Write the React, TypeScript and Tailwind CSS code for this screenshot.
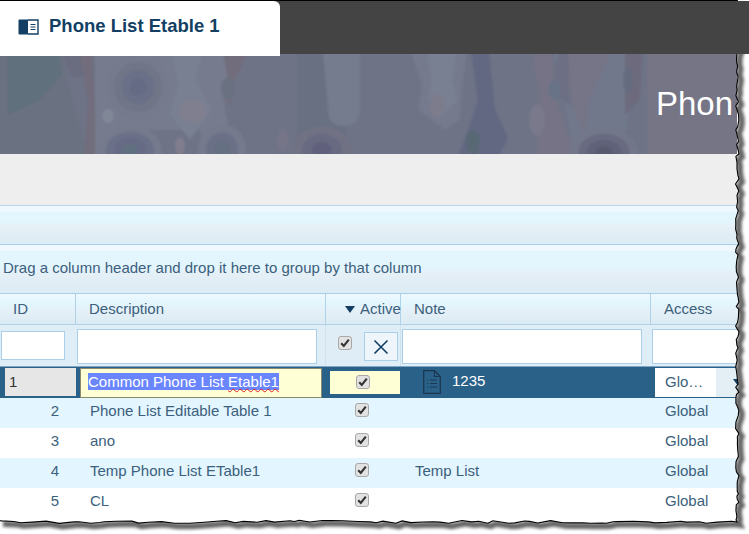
import React from "react";

const cols = "grid grid-cols-[76px_250px_75px_250px_150px] w-[801px]";

function seeded(seed: number) {
  let s = seed;
  return () => {
    s = (s * 16807) % 2147483647;
    return s / 2147483647;
  };
}

function buildEdge() {
  const r = seeded(4711);
  const pts: [number, number][] = [[737, 0]];
  let y = 0;
  while (y < 520) {
    y += 2 + r() * 5;
    pts.push([735.5 + r() * 3.5, Math.min(y, 520)]);
  }
  pts.push([737, 522]);
  let x = 737;
  while (x > 0) {
    x -= 4 + r() * 12;
    const yy = 520.5 + r() * 3 + (r() > 0.8 ? -1.5 : 0);
    pts.push([Math.max(x, 0), yy]);
  }
  return pts;
}

function TornEdge() {
  const pts = buildEdge();
  const line = pts.map((p, i) => (i ? "L" : "M") + p[0].toFixed(1) + " " + p[1].toFixed(1)).join(" ");
  const outside = line + " L0 534 L749 534 L749 0 Z";
  return (
    <svg className="absolute left-0 top-0" width="749" height="534" viewBox="0 0 749 534">
      <defs>
        <clipPath id="outside">
          <path d={outside} />
        </clipPath>
        <filter id="soft" x="-5%" y="-5%" width="110%" height="110%">
          <feGaussianBlur stdDeviation="1.6" />
        </filter>
      </defs>
      <path d={outside} fill="#ffffff" />
      <g clipPath="url(#outside)">
        <path d={line} transform="translate(3 3)" fill="none" stroke="#666666" strokeWidth="6" filter="url(#soft)" />
      </g>
      <path d={line} fill="none" stroke="#000000" strokeWidth="1.1" />
    </svg>
  );
}

function Rings({ x, y, rx, ry, colors }: { x: number; y: number; rx: number; ry: number; colors: string[] }) {
  return (
    <g>
      {colors.map((c, i) => {
        const k = 1 - i / colors.length;
        return <ellipse key={i} cx={x} cy={y} rx={rx * k} ry={ry * k} fill={c} />;
      })}
    </g>
  );
}

function HeroArt() {
  return (
    <svg className="block shrink-0" width="737" height="100" viewBox="0 54 737 100">
      <defs>
        <filter id="heroSoft" x="-2%" y="-10%" width="104%" height="120%">
          <feGaussianBlur stdDeviation="1" />
        </filter>
        <clipPath id="heroClip">
          <rect x="0" y="54" width="737" height="100" />
        </clipPath>
      </defs>
      <rect x="0" y="54" width="737" height="100" fill="#6e7386" />
      <g clipPath="url(#heroClip)">
        <g filter="url(#heroSoft)">
          <path d="M-10 44H60L72 100L90 164H-10Z" fill="#6b7180" />
          <path d="M7 44H58L62 75L40 100L8 115Z" fill="#61707d" />
          <path d="M58 44H82L88 75L72 78Z" fill="#6a6c80" />
          <path d="M78 44H92L98 164H84L88 100Z" fill="#716d7d" />
          <path d="M95 44H245L222 90L235 164H210L200 130H150L125 164H95Z" fill="#767c8e" />
          <Rings x={138} y={87} rx={32} ry={33} colors={["#757a8d", "#6f7487", "#6a6f87", "#656a85"]} />
          <path d="M170 44H205L195 80L212 110L190 140L170 115L178 85Z" fill="#788092" />
          <ellipse cx="193" cy="111" rx="14" ry="12" fill="#807f8f" />
          <ellipse cx="108" cy="116" rx="6" ry="7" fill="#808898" />
          <Rings x={130} y={150} rx={32} ry={24} colors={["#757a8d", "#6b7087", "#666b85", "#617080"]} />
          <ellipse cx="180" cy="146" rx="5" ry="9" fill="#807e8e" />
          <Rings x={222} y={150} rx={24} ry={26} colors={["#757a8d", "#6a7086", "#657082"]} />
          <path d="M222 44H252L225 100L232 105Z" fill="#716d7d" />
          <ellipse cx="228" cy="88" rx="7" ry="11" fill="#6b7180" />
          <ellipse cx="283" cy="140" rx="6" ry="12" fill="#767588" />
          <path d="M298 44H345L352 100L345 125L350 164H298Z" fill="#687081" />
          <path d="M322 44H360V110Q360 126 343 126Q328 126 328 110Z" fill="#757b8e" />
          <Rings x={322} y={150} rx={30} ry={24} colors={["#6f7284", "#686a82", "#61607c"]} />
          <path d="M408 44H468L462 90L460 120L445 130L418 110L422 85Z" fill="#747a8c" />
          <path d="M425 44H458L452 80L458 100L440 118L428 100L432 80Z" fill="#798092" />
          <ellipse cx="437" cy="106" rx="8" ry="12" fill="#7c7b8d" />
          <path d="M470 44H488L495 110L508 138L495 164H455L470 125L478 100Z" fill="#626782" />
          <ellipse cx="473" cy="142" rx="7" ry="12" fill="#586874" />
          <path d="M530 44H552L556 100L580 164H535L540 100Z" fill="#747385" />
          <ellipse cx="537" cy="120" rx="8" ry="16" fill="#7a798b" />
          <path d="M552 44H640L620 164H575L565 105Z" fill="#71788c" />
          <path d="M560 44H575L570 85L580 100L568 105L552 88Z" fill="#6d6f84" />
          <ellipse cx="555" cy="90" rx="6" ry="10" fill="#687388" />
          <path d="M568 44H615L590 100L585 140L570 100Z" fill="#767488" />
          <Rings x={604} y={152} rx={34} ry={24} colors={["#73778a", "#686a80", "#60627a", "#585a70"]} />
          <path d="M625 44H643L640 100L625 115Z" fill="#6d6b7e" />
          <ellipse cx="628" cy="80" rx="5" ry="13" fill="#666c80" />
          <rect x="647" y="44" width="100" height="120" fill="#757486" />
        </g>
      </g>
    </svg>
  );
}

function Check() {
  return (
    <span className="inline-flex w-[14px] h-[14px] items-center justify-center rounded-[3px] border border-[#a8a8a8] bg-[#e2e2e2] shrink-0">
      <svg width="10" height="10" viewBox="0 0 10 10">
        <path d="M1.2 5.2L3.8 8L8.8 1.6" fill="none" stroke="#333333" strokeWidth="2.1" />
      </svg>
    </span>
  );
}

const headBg = "bg-[linear-gradient(#eef8fe_0,#e3f6fe_30%,#e4eff6_60%,#dbebf4_100%)]";

function Row({ id, desc, note, alt }: { id: number; desc: string; note?: string; alt?: boolean }) {
  return (
    <div className={`${cols} h-[30px] items-center text-[15px] text-[#3b5f7c] pb-[3px] ${alt ? "bg-[#e3f5fe]" : "bg-white"}`}>
      <div className="text-right pr-[17px]">{id}</div>
      <div className="pl-[14px]">{desc}</div>
      <div className="pl-[29px]"><div className="flex -mt-[3px]"><Check /></div></div>
      <div className="pl-[14px]">{note}</div>
      <div className="pl-[14px]">Global</div>
    </div>
  );
}

export default function App() {
  return (
    <div className="relative w-[749px] h-[534px] overflow-hidden bg-white font-['Liberation_Sans',Arial,sans-serif]">
      <div className="h-[1px] bg-black" />
      <div className="h-[53px] bg-[#444444] flex relative z-10">
        <div className="w-[280px] h-[55px] bg-white rounded-tr-[6px] flex items-center pb-[4px] pl-[18px] gap-[10px] text-[#123f63]">
          <svg width="21" height="16" viewBox="0 0 21 16" className="shrink-0">
            <path d="M1.5 0.5H10V15.5H1.5Q0.5 15.5 0.5 14.5V1.5Q0.5 0.5 1.5 0.5Z" fill="#123f63" />
            <path d="M10 1H20V15H10" fill="#ffffff" stroke="#123f63" strokeWidth="1.4" />
            <path d="M12.5 5.5H17.5M12.5 8H17.5M12.5 10.5H17.5" stroke="#123f63" strokeWidth="1.1" />
          </svg>
          <span className="text-[18.5px] font-bold leading-none">Phone List Etable 1</span>
        </div>
      </div>
      <div className="relative h-[100px]">
        <HeroArt />
        <div className="absolute left-[656px] top-[31px] text-[33px] leading-[38px] text-white whitespace-nowrap">Phon</div>
      </div>
      <div className="h-[51px] bg-[#eeeeee]" />
      <div className="h-[39px] border-t border-[#b7d6e8] bg-[linear-gradient(#eef8fe_0,#eef8fe_14%,#e3f6fe_15%,#e3f6fe_40%,#e6eff6_55%,#dcecf5_100%)]" />
      <div className="h-[49px] border-t border-[#a9d0e8] bg-[linear-gradient(#eef8fe_0,#eef8fe_12%,#e3f6fe_13%,#e3f6fe_45%,#e5eff6_60%,#dcecf5_100%)] flex items-center pl-[3px] pb-[2px] text-[15px] text-[#3b5f7c]">
        Drag a column header and drop it here to group by that column
      </div>
      <div className={`${cols} h-[31px] border-t border-[#a9d0e8] text-[15px] text-[#3b5f7c] ${headBg}`}>
        <div className="border-r border-[#b0d2e8] pl-[13px] flex items-center">ID</div>
        <div className="border-r border-[#b0d2e8] pl-[13px] flex items-center">Description</div>
        <div className="border-r border-[#b0d2e8] flex items-center pl-[19px] gap-[5px]">
          <svg width="10" height="7" viewBox="0 0 10 7" className="shrink-0"><path d="M0 0H10L5 7Z" fill="#123f63" /></svg>
          <span>Active</span>
        </div>
        <div className="border-r border-[#b0d2e8] pl-[13px] flex items-center">Note</div>
        <div className="pl-[13px] flex items-center">Access</div>
      </div>
      <div className={`${cols} h-[42px] border-t border-[#b0d2e8] bg-[#deedf6]`}>
        <div className="pl-[1px] pt-[6px]">
          <div className="w-[64px] h-[29px] bg-white border border-[#a9d0e8]" />
        </div>
        <div className="border-r border-[#cfe2ee] pl-[1px] pt-[4px]">
          <div className="w-[240px] h-[35px] bg-white border border-[#a9d0e8]" />
        </div>
        <div className="border-r border-[#cfe2ee] flex pl-[12px] pt-[11px] gap-[12px]">
          <Check />
          <div className="w-[34px] h-[29px] -mt-[4px] border border-[#a9d0e8] bg-[#eef6fb] flex items-center justify-center">
            <svg width="16" height="16" viewBox="0 0 16 16"><path d="M1.5 1.5L14.5 14.5M14.5 1.5L1.5 14.5" stroke="#123f63" strokeWidth="1.6" /></svg>
          </div>
        </div>
        <div className="pl-[1px] pt-[4px]">
          <div className="w-[240px] h-[35px] bg-white border border-[#a9d0e8]" />
        </div>
        <div className="pl-[1px] pt-[4px]">
          <div className="w-[120px] h-[35px] bg-white border border-[#a9d0e8]" />
        </div>
      </div>
      <div className={`${cols} h-[32px] bg-[#2a6189] text-[15px] border-t border-[#7fa6c4]`}>
        <div className="pl-[5px] pt-[1px]">
          <div className="w-[71px] h-[29px] bg-[#e6e6e6] border-b border-[#2a6189] flex items-center pl-[4px] text-[#333333]">1</div>
        </div>
        <div className="pl-[4px] pt-[1px]">
          <div className="w-[242px] h-[30px] bg-[#ffffd5] border border-[#8a8a70] flex items-center pl-[7px] pb-[3px]">
            <span className="bg-[#6a86ff] text-white leading-[17px] whitespace-nowrap">
              Common Phone List <span className="underline decoration-wavy decoration-[#e02020] decoration-1">Etable1</span>
            </span>
          </div>
        </div>
        <div className="pl-[4px] pt-[4px]">
          <div className="w-[70px] h-[23px] bg-[#ffffd5] flex items-center pl-[26px] pb-[2px]"><Check /></div>
        </div>
        <div className="flex items-center pl-[22px] gap-[11px] pb-[2px]">
          <svg width="18" height="24" viewBox="0 0 18 24" className="shrink-0">
            <path d="M0.7 0.7H11.5L17.3 6.5V23.3H0.7Z" fill="none" stroke="#1b3850" strokeWidth="1.3" />
            <path d="M11.5 0.7V6.5H17.3" fill="none" stroke="#1b3850" strokeWidth="1.2" />
            <path d="M4 10H5.3M7 10H14M4 13.5H5.3M7 13.5H14M4 17H5.3M7 17H14" stroke="#1b3850" strokeWidth="1" />
          </svg>
          <span className="text-white">1235</span>
        </div>
        <div className="pl-[4px] pt-[1px]">
          <div className="w-[85px] h-[29px] flex bg-[#e4eef5] text-[#3b5f7c]">
            <div className="w-[61px] bg-white flex items-center pl-[10px] pb-[1px]">Glo…</div>
            <div className="flex-1 flex items-center justify-end">
              <svg width="10" height="7" viewBox="0 0 10 7" className="shrink-0 -mr-[3px]"><path d="M0 0H10L5 7Z" fill="#123f63" /></svg>
            </div>
          </div>
        </div>
      </div>
      <Row id={2} desc="Phone List Editable Table 1" alt />
      <Row id={3} desc="ano" />
      <Row id={4} desc="Temp Phone List ETable1" note="Temp List" alt />
      <Row id={5} desc="CL" />
      <TornEdge />
    </div>
  );
}
